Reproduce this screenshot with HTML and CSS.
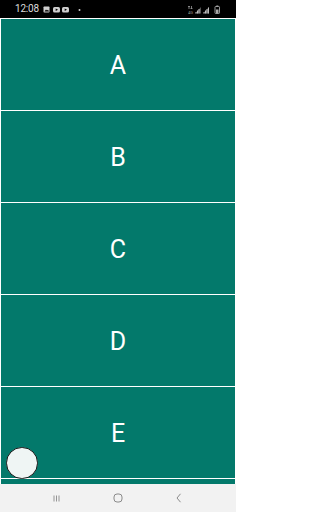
FILE: index.html
```html
<!DOCTYPE html>
<html>
<head>
<meta charset="utf-8">
<link rel="stylesheet" href="styles.css">
</head>
<body>
<div class="status">
  <span class="time">12:08</span>
  <svg class="sicons-left" width="44" height="8" viewBox="0 0 44 8">
    <rect x="0.5" y="0.5" width="6" height="6" rx="0.8" fill="#cfcfcf"/>
    <path d="M1.5 5.5 L3 3.5 L4 4.6 L5 3.8 L6 5.5 Z" fill="#000"/>
    <rect x="10" y="1" width="7" height="5.5" rx="1.6" fill="#cfcfcf"/>
    <path d="M12.7 2.4 L15 3.75 L12.7 5.1 Z" fill="#000"/>
    <rect x="19" y="1" width="7" height="5.5" rx="1.6" fill="#cfcfcf"/>
    <path d="M21.7 2.4 L24 3.75 L21.7 5.1 Z" fill="#000"/>
    <circle cx="36.5" cy="4" r="1" fill="#cfcfcf"/>
  </svg>
  <span class="spacer"></span>
  <svg class="sicons-right" width="34" height="9" viewBox="0 0 34 9">
    <path d="M1 1 V4 M0 2 L1 1 L2 2 M3.5 4 V1 M2.5 3 L3.5 4 L4.5 3" stroke="#9a9a9a" stroke-width="0.8" fill="none"/>
    <text x="0" y="8.5" font-size="4" fill="#9a9a9a" font-family="Roboto">4G</text>
    <path d="M7 8.5 H13 V2 Z" fill="#555"/>
    <path d="M8 8.5 V7 M9.5 8.5 V5.5 M11 8.5 V4" stroke="#bbb" stroke-width="1"/>
    <path d="M15 8.5 H21 V2 Z" fill="#555"/>
    <path d="M16 8.5 V7 M17.5 8.5 V5.5 M19 8.5 V4 M20.5 8.5 V2.5" stroke="#bbb" stroke-width="1"/>
    <rect x="27" y="1.5" width="4.5" height="7" rx="0.7" fill="none" stroke="#aaa" stroke-width="0.9"/>
    <rect x="28.3" y="0.5" width="2" height="1" fill="#aaa"/>
    <rect x="28" y="4.5" width="2.5" height="3.5" fill="#aaa"/>
  </svg>
</div>
<div class="list">
  <div class="panel">A</div>
  <div class="panel">B</div>
  <div class="panel">C</div>
  <div class="panel">D</div>
  <div class="panel">E</div>
  <div class="panel"></div>
  <div class="fab"></div>
</div>
<div class="navbar">
  <svg width="7" height="7" viewBox="0 0 7 7"><path d="M1 0.5 V6.5 M3.5 0.5 V6.5 M6 0.5 V6.5" stroke="#8a8a8a" stroke-width="0.9"/></svg>
  <svg width="10" height="10" viewBox="0 0 10 10"><rect x="1" y="1" width="8" height="8" rx="3" fill="none" stroke="#8a8a8a" stroke-width="1"/></svg>
  <svg width="6" height="10" viewBox="0 0 6 10"><path d="M4.5 0.8 L1 5 L4.5 9.2" fill="none" stroke="#8a8a8a" stroke-width="1"/></svg>
</div>
</body>
</html>
```

FILE: styles.css
```css
html, body {
  margin: 0;
  padding: 0;
}
body {
  width: 236px;
  height: 512px;
  overflow: hidden;
  background: #ffffff;
  display: flex;
  flex-direction: column;
  font-family: Roboto, "Noto Sans", sans-serif;
}
.status {
  height: 18px;
  flex: 0 0 18px;
  background: #000;
  display: flex;
  align-items: center;
  padding: 0 14px 0 15px;
  box-sizing: border-box;
}
.time {
  color: #dcdcdc;
  font-size: 10px;
  line-height: 10px;
  letter-spacing: -0.2px;
  margin-right: 4px;
}
.sicons-left {
  display: block;
  margin-top: 1px;
}
.spacer {
  flex: 1;
}
.sicons-right {
  display: block;
  margin-top: 1px;
}
.list {
  position: relative;
  flex: 1 1 auto;
  overflow: hidden;
  padding: 1px 1px 0 1px;
  display: flex;
  flex-direction: column;
  gap: 1.5px;
}
.panel {
  flex: 0 0 90.5px;
  background: #03796b;
  color: #ffffff;
  font-size: 25px;
  display: flex;
  align-items: center;
  justify-content: center;
  padding-top: 3px;
  box-sizing: border-box;
}
.fab {
  position: absolute;
  left: 6px;
  bottom: 5.5px;
  width: 31.5px;
  height: 31.5px;
  box-sizing: border-box;
  border-radius: 50%;
  border: 1.5px solid #1a1a1a;
  background: #eff5f4;
}
.navbar {
  flex: 0 0 28px;
  height: 28px;
  background: #f2f2f2;
  display: flex;
  align-items: center;
  justify-content: space-between;
  padding: 0 54px 0 53px;
  box-sizing: border-box;
}
.navbar svg {
  display: block;
}
```
